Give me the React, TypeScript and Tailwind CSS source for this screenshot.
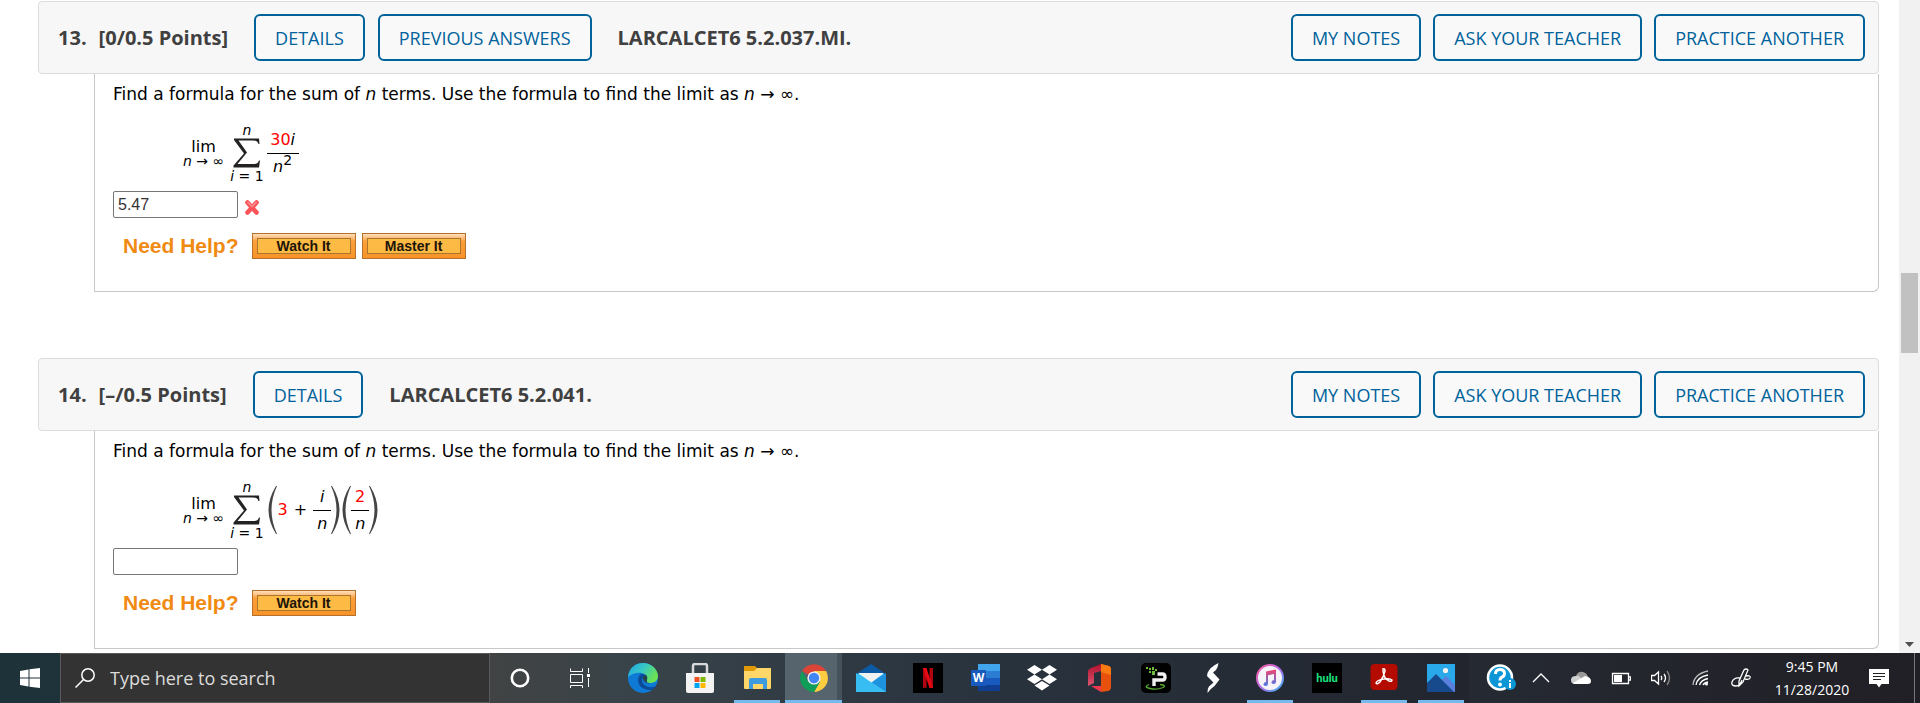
import { useState } from "react";
import type { ReactNode } from "react";

const outline =
  "h-[47px] px-[19px] rounded-md border-2 border-[#00629b] bg-[#f9f9f9] text-[#00629b] text-lg whitespace-nowrap";

function PillButton({ children }: { children: ReactNode }) {
  return <button className={outline}>{children}</button>;
}

function HelpButton({ children }: { children: ReactNode }) {
  return (
    <button className="h-[26px] w-[104px] border border-[#b5712c] bg-linear-to-b from-[#fde0bd] via-[#fb9f38] via-30% to-[#f79429] p-1">
      <span className="flex h-full items-center justify-center border border-[#a8762c] bg-[#fdba45] font-['Liberation_Sans',sans-serif] text-sm font-bold text-[#1c1408]">
        {children}
      </span>
    </button>
  );
}

function Sum() {
  return (
    <div className="flex items-center gap-1.5">
      <div className="flex flex-col items-center">
        <span className="text-base leading-4">lim</span>
        <span className="text-sm leading-3">
          <i>n</i> → ∞
        </span>
      </div>
      <div className="flex flex-col items-center text-sm leading-3">
        <i>n</i>
        <svg className="my-0.5 h-[30px] w-[27px]" viewBox="0 0 27 30">
          <path d="M1 .5H26L26.5 6H25.5Q24.5 2.5 20 2.5H5.5L14 14.5 4.5 26H21Q25 26 26 22.5H27L26 29.500H0.500V27.500L11 15.500 1 2Z" fill="#222" />
        </svg>
        <span>
          <i>i</i> = 1
        </span>
      </div>
    </div>
  );
}

function Fraction({ top, bottom, className = "" }: { top: ReactNode; bottom: ReactNode; className?: string }) {
  return (
    <div className={`flex flex-col items-center text-base leading-5 ${className}`}>
      <span>{top}</span>
      <span className="my-[3px] h-px w-full bg-black" />
      <span>{bottom}</span>
    </div>
  );
}

function Paren({ right = false }: { right?: boolean }) {
  return (
    <svg className="h-12 w-2.5" viewBox="0 0 10 48" fill="#444">
      <path d={right ? "M1 0Q16 24 1 48L0 48Q11 24 0 0Z" : "M9 0Q-6 24 9 48L10 48Q-1 24 10 0Z"} />
    </svg>
  );
}

function WrongMark() {
  return (
    <svg className="h-[17px] w-4" viewBox="0 0 16 17" role="img" aria-label="incorrect">
      <path d="M3.500 3.500 12.500 13.500M12.500 3.500 3.500 13.500" stroke="#fa5358" strokeWidth="4.600" strokeLinecap="round" />
      <path d="M3.500 3 8 7.500 12.500 3" stroke="#ff8f92" strokeWidth="1.500" fill="none" />
    </svg>
  );
}

type QuestionProps = {
  number: string;
  points: string;
  code: string;
  previous?: boolean;
  answer: string;
  wrong?: boolean;
  help: string[];
  children: ReactNode;
};

function Question({ number, points, code, previous, answer, wrong, help, children }: QuestionProps) {
  const [value, setValue] = useState(answer);

  return (
    <section>
      <header className="flex items-center rounded-sm border border-[#dcdcdc] bg-[#f7f7f7] px-[13px] py-3 font-['Open_Sans',sans-serif]">
        <h2 className="flex gap-3 pl-1.5 pr-[26px] text-xl font-bold text-[#404040]">
          <span>{number}.</span>
          <span>{points}</span>
        </h2>
        <div className="flex gap-[13px]">
          <PillButton>DETAILS</PillButton>
          {previous && <PillButton>PREVIOUS ANSWERS</PillButton>}
        </div>
        <strong className="pl-[26px] text-xl text-[#404040]">{code}</strong>
        <div className="ml-auto flex gap-3">
          <PillButton>MY NOTES</PillButton>
          <PillButton>ASK YOUR TEACHER</PillButton>
          <PillButton>PRACTICE ANOTHER</PillButton>
        </div>
      </header>

      <div className="ml-14 rounded-br-md border border-t-0 border-[#c8c8c8] px-[18px] pb-8 pt-2 font-['DejaVu_Sans',sans-serif] text-black">
        <p className="text-[17px] leading-6">
          Find a formula for the sum of <i>n</i> terms. Use the formula to find the limit as <i>n</i> → ∞.
        </p>
        <div className="ml-[70px] mt-3.5 flex h-[66px] items-center">
          <Sum />
          {children}
        </div>
        <div className="mt-[5px] flex items-end gap-1.5">
          <input
            aria-label={`Answer to question ${number}`}
            value={value}
            onChange={(e) => setValue(e.target.value)}
            className="h-[27px] w-[125px] rounded-xs border border-[#767676] px-1 font-['Liberation_Sans',sans-serif] text-base text-[#333]"
          />
          {wrong && (
            <span className="pb-0.5">
              <WrongMark />
            </span>
          )}
        </div>
        <div className="mt-[15px] flex items-center gap-1.5 pl-2.5">
          <span className="pr-[7px] font-['Liberation_Sans',sans-serif] text-[21px] font-bold leading-6 text-[#f08a13]">
            Need Help?
          </span>
          {help.map((h) => (
            <HelpButton key={h}>{h}</HelpButton>
          ))}
        </div>
      </div>
    </section>
  );
}

const apps: { name: string; open?: boolean; active?: boolean; icon: ReactNode }[] = [
  {
    name: "Edge",
    icon: (
      <>
        <defs>
          <linearGradient id="edgeTop" x1="0" x2="1" y1="0" y2=".5">
            <stop offset="0" stopColor="#1ea4e0" />
            <stop offset=".5" stopColor="#36c6c8" />
            <stop offset="1" stopColor="#6be352" />
          </linearGradient>
        </defs>
        <circle cx="15" cy="15" r="15" fill="#0f7ad6" />
        <path d="M0 14C1 5 7 0 15 0c9 0 15 7 15 13 0 5-4 7-8 7-3 0-4-1-3-3 1-3-1-6-5-7C9 9 3 11 0 14Z" fill="url(#edgeTop)" />
        <path d="M11 13c-3 7 2 14 11 14 3 0 5-2 6-4-6 3-14 0-14-6 0-2 2-4 4-4-2-2-5-3-7 0Z" fill="#0c4a96" />
        <path d="M15 15c0-2 2-3 3-3 2 2 1 4 1 5-1 2 0 3 2 3h1c-4 1-7-2-7-5Z" fill="#27404a" />
      </>
    ),
  },
  {
    name: "Store",
    icon: (
      <>
        <path d="M8 10V3q0-2 2-2h10q2 0 2 2v7" fill="none" stroke="#d8d8d8" strokeWidth="2.500" />
        <path d="M1 10h28v18q0 2-2 2H3q-2 0-2-2Z" fill="#f3f3f3" />
        <path d="M9.500 14h5v5h-5Z" fill="#f25022" />
        <path d="M15.500 14h5v5h-5Z" fill="#7fba00" />
        <path d="M9.500 20h5v5h-5Z" fill="#00a4ef" />
        <path d="M15.500 20h5v5h-5Z" fill="#ffb900" />
      </>
    ),
  },
  {
    name: "File Explorer",
    open: true,
    icon: (
      <>
        <path d="M2 3h11l2 2v4H2Z" fill="#e09a06" />
        <path d="M2 8h10l3-3h14v20q0 1-1 1H3q-1 0-1-1Z" fill="#ffd768" />
        <path d="M7 26V17q0-2 2-2h14q2 0 2 2v9h-4v-5H11v5Z" fill="#3d9be0" />
      </>
    ),
  },
  {
    name: "Chrome",
    open: true,
    active: true,
    icon: (
      <>
        <path d="M15 15 3 8A14 14 0 0 1 27.100 8Z" fill="#db4437" />
        <path d="M15 15V8H27.100A14 14 0 0 1 15 29L21 18.500Z" fill="#ffcd40" />
        <path d="M15 15 21 18.500 15 29A14 14 0 0 1 3 8L9 18.500Z" fill="#0f9d58" />
        <circle cx="15" cy="15" r="6.600" fill="#f1f1f1" />
        <circle cx="15" cy="15" r="5.200" fill="#4285f4" />
      </>
    ),
  },
  {
    name: "Mail",
    icon: (
      <>
        <path d="M0 11 15 1 30 11Z" fill="#0c59a4" />
        <path d="M0 11H30V29H0Z" fill="#42c8f5" />
        <path d="M15 19 30 10V29Z" fill="#1d93e0" />
        <path d="M0 29V10L30 29Z" fill="#38bdf2" />
        <path d="M2 10H28L15.500 19.500Z" fill="#f2f2f2" />
      </>
    ),
  },
  {
    name: "Netflix",
    icon: (
      <>
        <path d="M0 0h30v30H0Z" fill="#000" />
        <path d="M10 5h3.500v20q-2-.3-3.500 0ZM16.500 5H20v20q-2-.3-3.500 0Z" fill="#b1060f" />
        <path d="M10 5h3.500L20 25q-2-.3-3.500 0Z" fill="#e50914" />
      </>
    ),
  },
  {
    name: "Word",
    icon: (
      <>
        <path d="M8 1h22v7H8Z" fill="#41a5ee" />
        <path d="M8 8h22v7H8Z" fill="#2b7cd3" />
        <path d="M8 15h22v7H8Z" fill="#185abd" />
        <path d="M8 22h22v6H8Z" fill="#103f91" />
        <rect x="1" y="7" width="15" height="16" rx="1" fill="#185abd" />
        <text x="8.500" y="19" textAnchor="middle" fontSize="12" fontWeight="700" fill="#fff" fontFamily="Open Sans">W</text>
      </>
    ),
  },
  {
    name: "Dropbox",
    icon: (
      <path
        d="M7.500 2 15 6.800 7.500 11.500 0 6.800ZM22.500 2 30 6.800 22.500 11.500 15 6.800ZM7.500 11.500 15 16.300 7.500 21 0 16.300ZM22.500 11.500 30 16.300 22.500 21 15 16.300ZM7.500 22.600 15 17.900 22.500 22.600 15 27.400Z"
        fill="#fff"
      />
    ),
  },
  {
    name: "Office",
    icon: (
      <>
        <defs>
          <linearGradient id="office" x1="0" x2="0" y1="0" y2="1">
            <stop offset="0" stopColor="#b3112e" />
            <stop offset="1" stopColor="#dc5570" />
          </linearGradient>
        </defs>
        <path d="M17 1 17 8 10 10V20L4 23V9Q4 6 7 5Z" fill="url(#office)" />
        <path d="M17 1 25 3Q27 4 27 6V24Q27 27 24 28L17 29Z" fill="#e8500e" />
        <path d="M17 1 25 3Q27 4 27 6V12L17 9Z" fill="#fb7a10" />
        <path d="M7 23H17V29Z" fill="#ef3a4f" />
      </>
    ),
  },
  {
    name: "iP",
    icon: (
      <>
        <rect width="30" height="30" rx="5" fill="#000" />
        <path d="M16.500 11H21.500Q24 11 24 14T21.500 17H13V23" fill="none" stroke="#f0f0f0" strokeWidth="3.400" />
        <path d="M5 4h2v2H5ZM8 5h2v2H8ZM11 4h2v3h-2ZM8 8h2v2H8ZM11 8h3v4h-3ZM14 6h2v2h-2Z" fill="#6cbf3b" />
        <path d="M8 21.500Q2 24 9 25.500T22 24.500Q26 22.500 19 21.500" fill="none" stroke="#57a82e" strokeWidth="1.300" />
      </>
    ),
  },
  {
    name: "Slingshot",
    icon: (
      <path
        d="M20.500 0Q12 4 9.500 10L9 13 15.500 19.500 11 23.500Q9 26 9.500 30 12 26 16.500 23L21.500 16.500 15 9.500 18 7Q20 4 20.500 0Z"
        fill="#fff"
      />
    ),
  },
  {
    name: "iTunes",
    open: true,
    icon: (
      <>
        <defs>
          <linearGradient id="tunes" x1="0" x2="1" y1="0" y2="1">
            <stop offset="0" stopColor="#fb5c9c" />
            <stop offset=".5" stopColor="#b46be8" />
            <stop offset="1" stopColor="#31b8f2" />
          </linearGradient>
          <linearGradient id="note" x1="0" x2="0" y1="0" y2="1">
            <stop offset="0" stopColor="#f4436c" />
            <stop offset="1" stopColor="#4a7bea" />
          </linearGradient>
        </defs>
        <circle cx="15" cy="15" r="13" fill="#f5f2fa" stroke="url(#tunes)" strokeWidth="2" />
        <path d="M11 8.500 21 6.500V18.500Q21 21 18.500 21T16.500 19 19 17V11L13 12.200V20.500Q13 23 10.500 23T8.500 21 11 19Z" fill="url(#note)" />
      </>
    ),
  },
  {
    name: "Hulu",
    icon: (
      <>
        <path d="M0 0h30v30H0Z" fill="#000" />
        <text x="15" y="19" textAnchor="middle" fontSize="11" fontWeight="900" fill="#1ce783" fontFamily="Lato">hulu</text>
      </>
    ),
  },
  {
    name: "Acrobat",
    open: true,
    icon: (
      <>
        <rect x="1.500" y="1" width="27" height="26" rx="4" fill="#b30b00" />
        <path
          d="M14 6q2-1 2 2-1 5-5 11-3 3-4 1 1-3 8-4 6-1 8 1 0 2-3 1-5-2-6-10 0-2 0-2Z"
          fill="none"
          stroke="#fff"
          strokeWidth="1.500"
        />
      </>
    ),
  },
  {
    name: "Photos",
    open: true,
    icon: (
      <>
        <path d="M1 1h28v28H1Z" fill="#29a9ea" />
        <path d="M12 20 20 13 29 22V29H12Z" fill="#5b7fdc" />
        <path d="M1 20 10 11 28 29H1Z" fill="#174a8c" />
        <circle cx="19.500" cy="7.500" r="2.600" fill="#f2f2f2" />
      </>
    ),
  },
];

const tray: { name: string; icon: ReactNode }[] = [
  { name: "Show hidden icons", icon: <path d="M2 14 10 6 18 14" /> },
  {
    name: "OneDrive",
    icon: (
      <g stroke="none">
        <path d="M5 8Q7 3 12 4 16 5 17 9L8 13Z" fill="#9a9a9a" />
        <path d="M4 16q-4 0-4-4t5-4q2-1 4 1l7 7Z" fill="#d0d0d0" />
        <path d="M2 15 14 8q6 1 6 5 0 3-3 3H4q-1 0-2-1Z" fill="#fff" />
      </g>
    ),
  },
  {
    name: "Battery",
    icon: (
      <>
        <path d="M1.500 5.500h16v10h-16ZM18 9h1.500v3H18" />
        <path d="M3 7h8v7H3Z" fill="#fff" stroke="none" />
      </>
    ),
  },
  {
    name: "Volume",
    icon: (
      <>
        <path d="M.5 7.500h3L7.500 4V16L3.500 12.500h-3ZM10 8q1.500 2 0 4M13 6q3 4 0 8" />
        <path d="M16 3q5 7 0 14" stroke="#888" />
      </>
    ),
  },
  {
    name: "Network",
    icon: (
      <>
        <path d="M2 17Q3 6 17 3" stroke="#bbb" />
        <path d="M5 17Q6 9 17 7M8.500 17Q10 12 17 10.500M12 17q1-2 5-3" />
        <circle cx="15.500" cy="16" r="1.500" fill="#fff" stroke="none" />
      </>
    ),
  },
  {
    name: "Windows Ink",
    icon: <path d="M8 13 13 2q2-2 4 0L12 14l-4 4ZM9 10Q3 9 1 14q-1 4 4 4 4 0 6-6M15 8q5-1 4 2-1 2-5 1" />,
  },
];

function Taskbar() {
  return (
    <footer className="flex h-[50px] shrink-0 items-stretch bg-linear-to-r from-[#1e323a] via-[#2a3943] via-45% to-[#211f26] font-['Open_Sans',sans-serif] text-white">
      <button aria-label="Start" className="flex w-15 items-center justify-center">
        <svg className="size-5" viewBox="0 0 20 20" fill="#fff">
          <path d="M0 3 8.500 1.500V9.500H0ZM9.500 1.300 20 0V9.500H9.500ZM0 10.500H8.500V18.500L0 17ZM9.500 10.500H20V20L9.500 18.700Z" />
        </svg>
      </button>
      <label className="flex w-[430px] items-center gap-[15px] border border-[#5a5a5a] bg-[#333] pl-3.5">
        <svg className="size-5 shrink-0" viewBox="0 0 20 20" fill="none" stroke="#fff" strokeWidth="1.500">
          <circle cx="13" cy="7" r="6.200" />
          <path d="M8.500 11.500.5 19.500" />
        </svg>
        <input
          type="text"
          placeholder="Type here to search"
          aria-label="Type here to search"
          className="min-w-0 flex-1 bg-transparent text-lg outline-none placeholder:text-[#dcdcdc]"
        />
      </label>
      <div className="flex bg-linear-to-r from-[#414344] to-[#3a4347]">
        <button aria-label="Cortana" className="flex w-15 items-center justify-center">
          <svg className="size-5" viewBox="0 0 20 20" fill="none" stroke="#fff" strokeWidth="2.600">
            <circle cx="10" cy="10" r="8.200" />
          </svg>
        </button>
        <button aria-label="Task View" className="flex w-15 items-center justify-center">
          <svg className="size-5" viewBox="0 0 20 20" fill="none" stroke="#fff">
            <path d="M.5.500V3.500H12.500V.500M.5 6.500H12.500V14.500H.5ZM.5 20V17.500H12.500V20M18.500 0V5M18.500 10V19" />
            <path d="M17 6h3v3h-3Z" fill="#fff" stroke="none" />
          </svg>
        </button>
      </div>
      <div className="flex bg-linear-to-r from-[#39444a] via-[#29343f] via-40% to-[#22252e] pl-1">
        {apps.map((app) => (
          <button
            key={app.name}
            aria-label={app.name}
            className={`flex w-[57px] flex-col items-center pt-2.5 ${
              app.active ? "bg-[#56646d] shadow-[inset_-5px_0_#46525a]" : ""
            }`}
          >
            <svg className="size-[30px]" viewBox="0 0 30 30">
              {app.icon}
            </svg>
            {app.open && <span className={`mt-[7px] h-[3px] bg-[#76b9ed] ${app.active ? "w-full" : "w-[46px]"}`} />}
          </button>
        ))}
      </div>
      <div className="ml-auto flex items-center">
        <button aria-label="Help" className="flex w-10 justify-center">
          <svg className="size-[30px]" viewBox="0 0 30 30">
            <circle cx="14" cy="14.500" r="12" fill="#0c96d6" stroke="#fff" strokeWidth="2.500" />
            <path d="M9.500 11q0-4.500 4.500-4.500t4.500 4q0 2.500-2.500 3.700-2 1-2 3.300" fill="none" stroke="#fff" strokeWidth="3" />
            <circle cx="14" cy="21.500" r="2" fill="#fff" />
            <circle cx="24" cy="21" r="6" fill="#0c96d6" />
            <path d="M23 20h2v5h-2ZM23 17h2v2h-2Z" fill="#fff" />
          </svg>
        </button>
        <div className="flex pr-1">
          {tray.map((item) => (
            <button key={item.name} aria-label={item.name} className="flex w-10 justify-center">
              <svg className="size-5" viewBox="0 0 20 20" fill="none" stroke="#fff" strokeWidth="1.300">
                {item.icon}
              </svg>
            </button>
          ))}
        </div>
        <div className="flex w-[94px] flex-col items-center text-sm leading-[23px]">
          <time>9:45 PM</time>
          <time>11/28/2020</time>
        </div>
        <button aria-label="Notifications" className="flex w-10 justify-center">
          <svg className="size-5" viewBox="0 0 20 20">
            <path d="M0 1h20v15h-7.500L10 19.500 7.500 16H0Z" fill="#fff" />
            <path d="M4 5.500h12M4 8.500h12M4 11.500h8" stroke="#222" />
          </svg>
        </button>
        <span className="ml-[15px] mr-[5px] h-[50px] w-px bg-[#77767b]" />
      </div>
    </footer>
  );
}

export default function App() {
  return (
    <div className="flex h-screen flex-col overflow-hidden bg-white">
      <div className="flex min-h-0 flex-1">
        <main className="flex min-w-0 flex-1 flex-col gap-[66px] overflow-hidden pl-[38px] pr-5 pt-px">
          <Question
            number="13"
            points="[0/0.5 Points]"
            code="LARCALCET6 5.2.037.MI."
            previous
            answer="5.47"
            wrong
            help={["Watch It", "Master It"]}
          >
            <Fraction
              className="ml-[3px] w-8"
              top={
                <>
                  <span className="text-[#f00]">30</span>
                  <i>i</i>
                </>
              }
              bottom={
                <>
                  <i>n</i>
                  <sup className="text-sm">2</sup>
                </>
              }
            />
          </Question>
          <Question number="14" points="[–/0.5 Points]" code="LARCALCET6 5.2.041." answer="" help={["Watch It"]}>
            <div className="ml-[3px] flex items-center text-base">
              <Paren />
              <span className="flex gap-1.5 pl-px pr-1.5">
                <span className="text-[#f00]">3</span>
                <span>+</span>
              </span>
              <Fraction className="w-[18px]" top={<i>i</i>} bottom={<i>n</i>} />
              <Paren right />
              <Paren />
              <Fraction className="w-[18px]" top={<span className="text-[#f00]">2</span>} bottom={<i>n</i>} />
              <Paren right />
            </div>
          </Question>
        </main>
        <aside className="flex w-[21px] flex-col items-center justify-between bg-[#f1f1f1] pb-1.5">
          <span className="mt-[273px] h-20 w-[17px] bg-[#c1c1c1]" />
          <svg className="h-[5px] w-[9px]" viewBox="0 0 9 5">
            <path d="M0 0h9L4.500 5Z" fill="#505050" />
          </svg>
        </aside>
      </div>
      <Taskbar />
    </div>
  );
}
